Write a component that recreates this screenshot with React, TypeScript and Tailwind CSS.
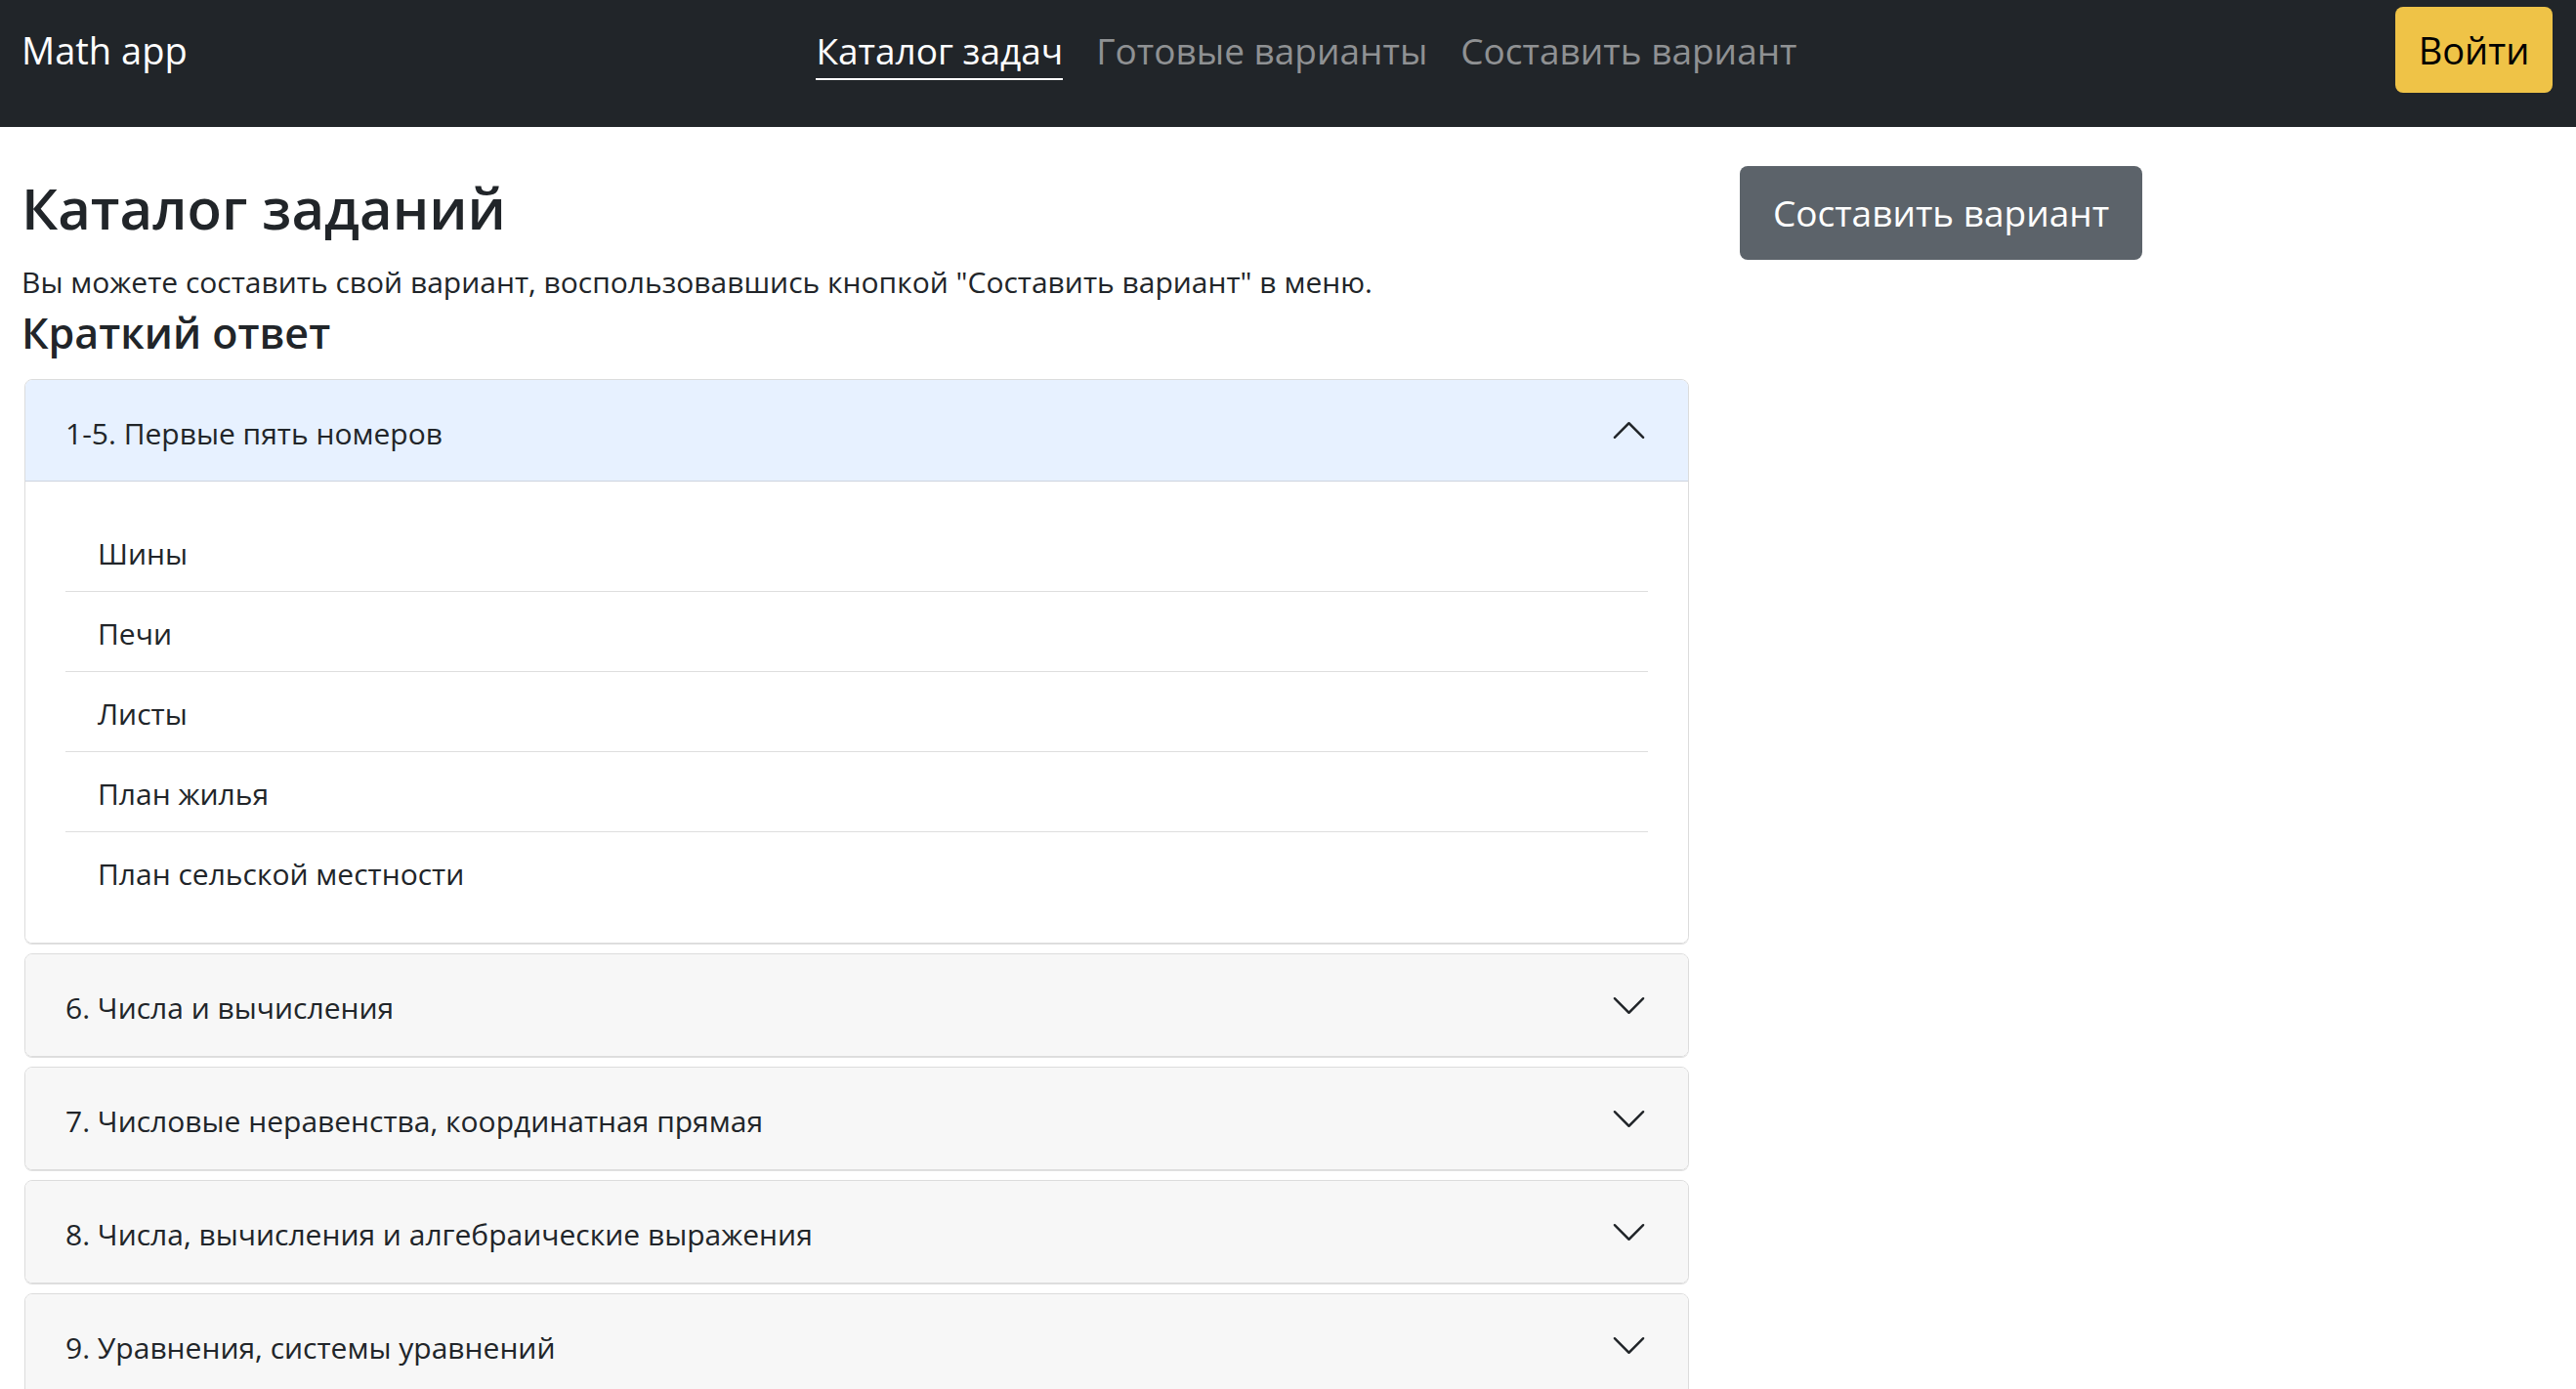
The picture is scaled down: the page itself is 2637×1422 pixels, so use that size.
import { useState } from "react";

type Section = {
  id: number;
  title: string;
  topics: string[];
};

const sections: Section[] = [
  {
    id: 1,
    title: "1-5. Первые пять номеров",
    topics: ["Шины", "Печи", "Листы", "План жилья", "План сельской местности"],
  },
  { id: 6, title: "6. Числа и вычисления", topics: [] },
  { id: 7, title: "7. Числовые неравенства, координатная прямая", topics: [] },
  { id: 8, title: "8. Числа, вычисления и алгебраические выражения", topics: [] },
  { id: 9, title: "9. Уравнения, системы уравнений", topics: [] },
  { id: 10, title: "10. Статистика и теория вероятностей", topics: [] },
];

function Chevron({ up }: { up: boolean }) {
  return (
    <svg
      className={up ? "h-[39px] w-[39px] shrink-0 rotate-180" : "h-[39px] w-[39px] shrink-0"}
      viewBox="0 0 16 16"
      fill="#212529"
    >
      <path
        fillRule="evenodd"
        d="M1.646 4.646a.5.5 0 0 1 .708 0L8 10.293l5.646-5.647a.5.5 0 0 1 .708.708l-6 6a.5.5 0 0 1-.708 0l-6-6a.5.5 0 0 1 0-.708z"
      />
    </svg>
  );
}

function Navbar() {
  return (
    <header className="flex h-[130px] items-start bg-[#212529] pl-[22px] pr-[24px] pt-[7px]">
      <div className="flex-1">
        <a className="mt-[16px] block text-[38px] leading-[57px] text-white" href="#">
          Math app
        </a>
      </div>
      <nav className="ml-[40px] mt-[16px] flex gap-[34px] text-[37px] leading-[57px]">
        <a className="border-b-2 border-white text-white" href="#">
          Каталог задач
        </a>
        <a className="text-[#8f9193]" href="#">
          Готовые варианты
        </a>
        <a className="text-[#8f9193]" href="#">
          Составить вариант
        </a>
      </nav>
      <div className="flex flex-1 justify-end">
        <button
          className="h-[88px] w-[161px] rounded-[8px] bg-[#efc347] text-[38px] text-black"
          type="button"
        >
          Войти
        </button>
      </div>
    </header>
  );
}

function AccordionItem({
  section,
  open,
  onToggle,
}: {
  section: Section;
  open: boolean;
  onToggle: () => void;
}) {
  return (
    <div className="overflow-hidden rounded-[8px] border border-[#dcdcdc] shadow-[0_1px_0_#e0e0e0]">
      <button
        className={
          open
            ? "flex h-[104px] w-full items-center justify-between border-b border-[#cdd4de] bg-[#e7f1ff] pl-[41px] pr-[41px] text-left"
            : "flex h-[104px] w-full items-center justify-between bg-[#f7f7f7] pl-[41px] pr-[41px] text-left"
        }
        type="button"
        onClick={onToggle}
      >
        <span className="pt-[5px] text-[30px] text-[#212529]">{section.title}</span>
        <Chevron up={open} />
      </button>
      {open && (
        <ul className="bg-white px-[41px] py-[31px]">
          {section.topics.map((topic, i) => (
            <li
              className={
                i < section.topics.length - 1
                  ? "flex h-[82px] items-center border-b border-[#dedede] pl-[33px] pt-[3px] text-[30px] text-[#212529]"
                  : "flex h-[82px] items-center pl-[33px] pt-[3px] text-[30px] text-[#212529]"
              }
              key={topic}
            >
              {topic}
            </li>
          ))}
        </ul>
      )}
    </div>
  );
}

export default function App() {
  const [openId, setOpenId] = useState<number | null>(1);

  return (
    <div className="min-h-screen bg-white font-['Open_Sans',sans-serif] text-[#212529]">
      <Navbar />
      <main className="flex pt-[40px]">
        <div className="w-[1758px] pl-[22px] pr-[29px]">
          <h1 className="mt-[8px] text-[58px] font-semibold leading-[69px]">Каталог заданий</h1>
          <p className="mt-[21px] text-[30px] leading-[42px]">
            Вы можете составить свой вариант, воспользовавшись кнопкой "Составить вариант" в меню.
          </p>
          <h3 className="mt-[5px] text-[43px] font-semibold leading-[52px]">Краткий ответ</h3>
          <div className="ml-[3px] mt-[21px] flex flex-col gap-[10px]">
            {sections.map((section) => (
              <AccordionItem
                key={section.id}
                open={openId === section.id}
                section={section}
                onToggle={() => setOpenId(openId === section.id ? null : section.id)}
              />
            ))}
          </div>
        </div>
        <div className="pl-[23px]">
          <button
            className="h-[96px] w-[412px] rounded-[8px] bg-[#5c636a] text-[37px] text-white"
            type="button"
          >
            Составить вариант
          </button>
        </div>
      </main>
    </div>
  );
}
